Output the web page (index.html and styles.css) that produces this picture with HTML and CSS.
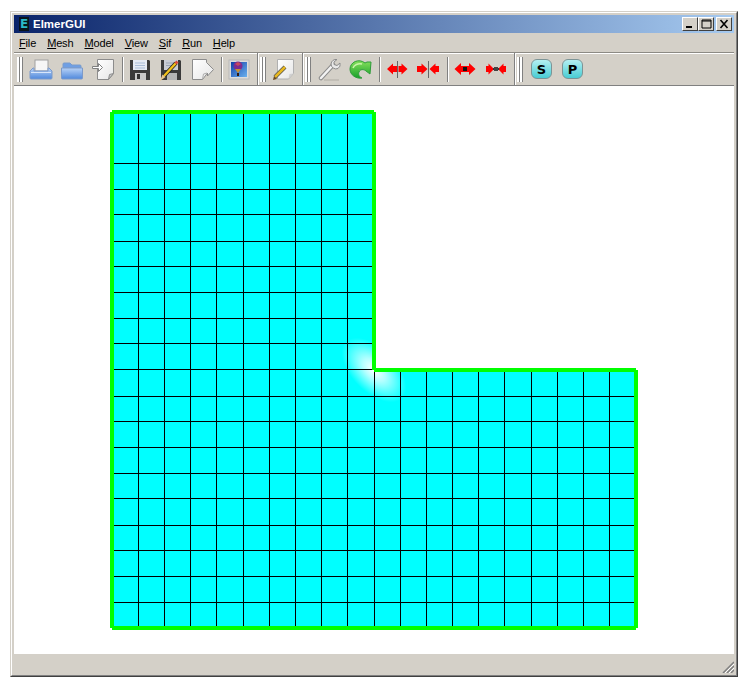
FILE: index.html
```html
<!DOCTYPE html>
<html lang="en">
<head>
  <meta charset="UTF-8" />
  <title>ElmerGUI</title>
  <link rel="stylesheet" href="styles.css">
</head>
<body>
  <div class="window">
    <div class="frame">
      <div class="titlebar">
        <span class="logo">E</span>
        <span class="title">ElmerGUI</span>
        <div class="win-buttons">
          <span class="win-btn"><svg width="12" height="10" viewBox="0 0 12 10"><rect x="2" y="7" width="6" height="2" fill="#000"/></svg></span>
          <span class="win-btn"><svg width="12" height="10" viewBox="0 0 12 10"><path d="M2 1h9v8H2zM2 2h9" fill="none" stroke="#000"/></svg></span>
          <span class="win-btn close"><svg width="12" height="10" viewBox="0 0 12 10"><path d="M2.500 1l7 8M9.500 1l-7 8" fill="none" stroke="#000" stroke-width="1.600"/></svg></span>
        </div>
      </div>

      <div class="menubar">
        <span><u>F</u>ile</span>
        <span><u>M</u>esh</span>
        <span><u>M</u>odel</span>
        <span><u>V</u>iew</span>
        <span><u>S</u>if</span>
        <span><u>R</u>un</span>
        <span><u>H</u>elp</span>
      </div>

      <div class="toolbar">
        <div class="handle first"></div>
        <div class="tool">
          <svg width="24" height="24" viewBox="0 0 24 24">
            <defs>
              <linearGradient id="blue" x1="0" y1="0" x2="0" y2="1"><stop offset="0" stop-color="#b8d2f6"/><stop offset="1" stop-color="#4f88dc"/></linearGradient>
              <linearGradient id="paper" x1="0" y1="0" x2="1" y2="1"><stop offset="0" stop-color="#fff"/><stop offset="1" stop-color="#e6e6e6"/></linearGradient>
              <linearGradient id="green" x1="0" y1="0" x2="0" y2="1"><stop offset="0" stop-color="#86e05c"/><stop offset="1" stop-color="#17a02a"/></linearGradient>
              <linearGradient id="sky" x1="0" y1="0" x2="1" y2="1"><stop offset="0" stop-color="#0f3fa8"/><stop offset="1" stop-color="#6ab0ee"/></linearGradient>
            </defs>
            <rect x="6" y="3" width="13" height="11" fill="#f6f6f6" stroke="#a0a0a0"/>
            <path d="M4 11h1v3h14v-3h1l3 3v7a1 1 0 0 1-1 1H2a1 1 0 0 1-1-1v-7z" fill="url(#blue)" stroke="#7c9aca"/>
            <rect x="2" y="15" width="20" height="1" fill="#d8e6fa"/>
          </svg>
        </div>
        <div class="tool">
          <svg width="24" height="24" viewBox="0 0 24 24">
            <path d="M3 8V7a1 1 0 0 1 1-1h6l2 2h8a1 1 0 0 1 1 1v2H3z" fill="#6f9fe4" stroke="#7a9ccc"/>
            <path d="M1.500 11h21v10a1 1 0 0 1-1 1h-19a1 1 0 0 1-1-1z" fill="url(#blue)" stroke="#7c9aca"/>
          </svg>
        </div>
        <div class="tool">
          <svg width="24" height="24" viewBox="0 0 24 24">
            <path d="M6.500 2.500h16v14l-5 6h-11z" fill="url(#paper)" stroke="#8c8c8c"/>
            <path d="M17.500 22.500l1-5 4-1z" fill="#c8c8c8" stroke="#8c8c8c"/>
            <path d="M1.500 9.500h6v-3l4 4-4 4v-3h-6z" fill="#fff" stroke="#808080"/>
          </svg>
        </div>
        <div class="sep"></div>
        <div class="tool">
          <svg width="24" height="24" viewBox="0 0 24 24">
            <path d="M2 3h19l1 1v19H2z" fill="#3a3a3a"/>
            <rect x="5" y="3" width="14" height="10" fill="#e4eaf4"/>
            <path d="M7 6h10M7 8.500h10M7 11h10" stroke="#a8bcd8"/>
            <rect x="7" y="16" width="11" height="7" fill="#c8c8c8"/>
            <rect x="9" y="17" width="3" height="5" fill="#333"/>
          </svg>
        </div>
        <div class="tool">
          <svg width="24" height="24" viewBox="0 0 24 24">
            <path d="M2 3h19l1 1v19H2z" fill="#3a3a3a"/>
            <rect x="5" y="3" width="14" height="10" fill="#c8ccd4"/>
            <path d="M7 6h10M7 8.500h10" stroke="#9aa4b4"/>
            <rect x="8" y="16" width="10" height="7" fill="#b4b4b4"/>
            <path d="M5 19L17 6" stroke="#222" stroke-width="4"/>
            <path d="M5 19L17 6" stroke="#f2c21c" stroke-width="2.400"/>
            <path d="M16.500 6.500l2-2" stroke="#d84a3c" stroke-width="3"/>
            <path d="M1 24l2.500-6.500 3 2.500z" fill="#e8c890"/>
          </svg>
        </div>
        <div class="tool">
          <svg width="24" height="24" viewBox="0 0 24 24">
            <path d="M2.500 2.500h14v3l7 7-6 6.500v-3l-5 6.500h-10z" fill="url(#paper)" stroke="#8c8c8c"/>
            <path d="M12.500 22l1-5 3.500-1" fill="none" stroke="#b0b0b0"/>
          </svg>
        </div>
        <div class="sep"></div>
        <div class="tool">
          <svg width="24" height="24" viewBox="0 0 24 24">
            <rect x="2" y="3" width="20" height="19" fill="#dcdcdc" stroke="#b8b8b8"/>
            <rect x="4" y="5" width="16" height="15" fill="url(#sky)"/>
            <circle cx="11" cy="9" r="4.500" fill="#7c2c90"/>
            <path d="M8 7l3-2 3 2-3 2z" fill="#c8485c"/>
            <path d="M8 12l3 4 3-4z" fill="#c89030"/>
            <rect x="10" y="16" width="2" height="3" fill="#331a10"/>
          </svg>
        </div>
        <div class="break"></div>
        <div class="handle"></div>
        <div class="tool">
          <svg width="24" height="24" viewBox="0 0 24 24">
            <path d="M5.500 2.500h16v14l-5 5.500h-11z" fill="url(#paper)" stroke="#b0b0b0"/>
            <path d="M16.500 22l1-5 4-.500z" fill="#d0d0d0"/>
            <path d="M3 20L13 10" stroke="#555" stroke-width="4"/>
            <path d="M3 20L13 10" stroke="#e8b820" stroke-width="2.500"/>
            <path d="M1 23l1-4 3 3z" fill="#6b4a20"/>
          </svg>
        </div>
        <div class="break"></div>
        <div class="handle"></div>
        <div class="tool">
          <svg width="24" height="24" viewBox="0 0 24 24">
            <path d="M4 21L16 8" stroke="#8c8c8c" stroke-width="4.500" stroke-linecap="round"/>
            <path d="M4 21L16 8" stroke="#f2f2f2" stroke-width="2.500" stroke-linecap="round"/>
            <path d="M20 2.500a5 5 0 0 0-6 4.500a5 5 0 0 0 7 4.500a5 5 0 0 0 2-5.500l-3 2.500-3-1v-2.500z" fill="#e8e8e8" stroke="#8c8c8c"/>
            <path d="M7 23h15" stroke="#bcb8b0" stroke-width="1.500"/>
          </svg>
        </div>
        <div class="tool">
          <svg width="24" height="24" viewBox="0 0 24 24">
            <path d="M23 5l-1 12-4-3c-2-2-6-2-7 1-1 2 0 5 3 6-6 1-12-3-12-9 0-7 9-11 15-6l2-1z" fill="url(#green)" stroke="#2e9c3a"/>
            <path d="M5 11c1-3 5-5 9-4" stroke="#c8f4a8" stroke-width="1.500" fill="none"/>
          </svg>
        </div>
        <div class="sep"></div>
        <div class="tool">
          <svg width="24" height="24" viewBox="0 0 24 24">
            <path d="M2 12l6-5.500V9h4v6H8v2.500zM22.500 12l-6-5.500V9h-3v6h3v2.500z" fill="#f00"/>
            <path d="M12.500 4v17" stroke="#666"/>
          </svg>
        </div>
        <div class="tool">
          <svg width="24" height="24" viewBox="0 0 24 24">
            <path d="M11.500 12l-6-5.500V9H1v6h4.500v2.500zM13.500 12l6-5.500V9H23v6h-3.500v2.500z" fill="#f00"/>
            <path d="M12.500 4v17" stroke="#666"/>
          </svg>
        </div>
        <div class="sep"></div>
        <div class="tool">
          <svg width="24" height="24" viewBox="0 0 24 24">
            <path d="M1.500 12l6.500-6v3h8V6l6.500 6-6.500 6v-3H8v3z" fill="#f00"/>
            <rect x="10" y="10" width="4" height="4" fill="#111"/>
          </svg>
        </div>
        <div class="tool">
          <svg width="24" height="24" viewBox="0 0 24 24">
            <path d="M10 12L4.500 6.500V9H2v6h2.500v2.500zM14 12l5.500-5.500V9H22v6h-2.500v2.500z" fill="#f00"/>
            <path d="M9 12h6" stroke="#333" stroke-width="2"/>
            <rect x="10" y="10" width="4" height="4" fill="#444"/>
          </svg>
        </div>
        <div class="break"></div>
        <div class="handle"></div>
        <div class="tool"><span class="letter-btn">S</span></div>
        <div class="tool"><span class="letter-btn">P</span></div>
      </div>

      <div class="canvas">
        <svg class="mesh" width="720" height="568" viewBox="14 86 720 568">
          <defs>
            <radialGradient id="glow"><stop offset="0" stop-color="#fff"/><stop offset="0.35" stop-color="#b4ffff"/><stop offset="1" stop-color="#0ff"/></radialGradient>
            <clipPath id="shape"><path d="M112 112H374V370H636V628H112Z"/></clipPath>
          </defs>
          <path d="M112 112H374V370H636V628H112Z" fill="#0ff"/>
          <g clip-path="url(#shape)">
            <ellipse cx="374" cy="370" rx="40" ry="22" fill="url(#glow)" transform="rotate(45 374 370)"/>
          </g>
          <path d="M138.500 112V628M164.500 112V628M190.500 112V628M216.500 112V628M243.500 112V628M269.500 112V628M295.500 112V628M321.500 112V628M347.500 112V628M374.500 370V628M400.500 370V628M426.500 370V628M452.500 370V628M478.500 370V628M504.500 370V628M531.500 370V628M557.500 370V628M583.500 370V628M609.500 370V628" stroke="#000" fill="none"/>
          <path d="M112 163.500H374M112 189.500H374M112 214.500H374M112 241.500H374M112 266.500H374M112 292.500H374M112 318.500H374M112 343.500H374M112 369.500H374M112 396.500H636M112 421.500H636M112 447.500H636M112 473.500H636M112 498.500H636M112 525.500H636M112 550.500H636M112 576.500H636M112 602.500H636" stroke="#000" fill="none"/>
          <path d="M112 112H374M374 112V370M374 370H636M636 370V628M636 628H112M112 628V112" stroke="#0f0" stroke-width="4" fill="none"/>
        </svg>
      </div>

      <div class="statusbar">
        <svg width="12" height="12" viewBox="0 0 12 12">
          <path d="M12 1L1 12M12 5L5 12M12 9L9 12" stroke="#808080" stroke-width="1.500"/>
          <path d="M12 3L3 12M12 7L7 12" stroke="#fff"/>
        </svg>
      </div>
    </div>
  </div>
</body>
</html>
```

FILE: styles.css
```css
body {
  margin: 0;
  background: #fff;
  font-family: "Liberation Sans", Arial, sans-serif;
  font-size: 11px;
  color: #000;
}
.window {
  box-sizing: border-box;
  width: 728px;
  height: 666px;
  margin: 11px 0 0 10px;
  border: 1px solid;
  border-color: #d4d0c8 #404040 #404040 #d4d0c8;
}
.frame {
  box-sizing: border-box;
  height: 100%;
  display: flex;
  flex-direction: column;
  padding: 2px;
  background: #d4d0c8;
  border: 1px solid;
  border-color: #fff #808080 #808080 #fff;
}
.titlebar {
  height: 18px;
  display: flex;
  align-items: center;
  background: linear-gradient(90deg, #0a246a, #a6caf0);
  color: #fff;
}
.logo {
  width: 10px;
  height: 14px;
  margin-left: 5px;
  background: #08141c;
  color: #2ab8c8;
  font-family: "DejaVu Sans", sans-serif;
  font-weight: bold;
  font-size: 12px;
  line-height: 14px;
  text-align: center;
}
.title {
  margin-left: 4px;
  font-weight: bold;
  font-size: 11.500px;
}
.win-buttons {
  margin-left: auto;
  margin-right: 2px;
  display: flex;
}
.win-btn {
  box-sizing: border-box;
  width: 16px;
  height: 14px;
  display: flex;
  align-items: center;
  justify-content: center;
  background: #d4d0c8;
  border: 1px solid;
  border-color: #fff #404040 #404040 #fff;
}
.win-btn.close {
  margin-left: 2px;
}
.menubar {
  height: 19px;
  display: flex;
  align-items: center;
  gap: 11px;
  padding-left: 5px;
  letter-spacing: -0.15px;
}
.toolbar {
  box-sizing: border-box;
  height: 34px;
  display: flex;
  align-items: center;
  border-top: 1px solid #8c8a84;
  border-bottom: 1px solid #808080;
  box-shadow: inset 0 1px 0 #fff;
}
.handle {
  width: 6px;
  height: 25px;
  margin: 0 3px 0 1px;
  background: linear-gradient(90deg, #fff 0 2px, #808080 2px 3px, #fff 3px 5px, #808080 5px);
}
.handle.first {
  margin-left: 3px;
}
.tool {
  width: 31px;
  height: 24px;
  padding-left: 3px;
  box-sizing: border-box;
}
.tool svg {
  display: block;
}
.sep {
  width: 1px;
  height: 25px;
  margin: 0 1px 0 3px;
  background: #808080;
  border-right: 1px solid #fff;
}
.break {
  align-self: stretch;
  width: 1px;
  margin-left: 2px;
  background: #808080;
  border-right: 1px solid #fff;
}
.letter-btn {
  box-sizing: border-box;
  width: 21px;
  height: 20px;
  margin: 2px 0 0 2px;
  display: flex;
  align-items: center;
  justify-content: center;
  border: 1px solid #7c9496;
  border-radius: 6px;
  background: linear-gradient(#b4f0f2, #48ccd4);
  font-family: "DejaVu Sans", sans-serif;
  font-weight: bold;
  font-size: 13px;
}
.canvas {
  height: 568px;
  background: #fff;
}
.mesh {
  display: block;
}
.statusbar {
  flex: 1;
  display: flex;
  justify-content: flex-end;
  align-items: flex-end;
}
.statusbar svg {
  display: block;
}
```
